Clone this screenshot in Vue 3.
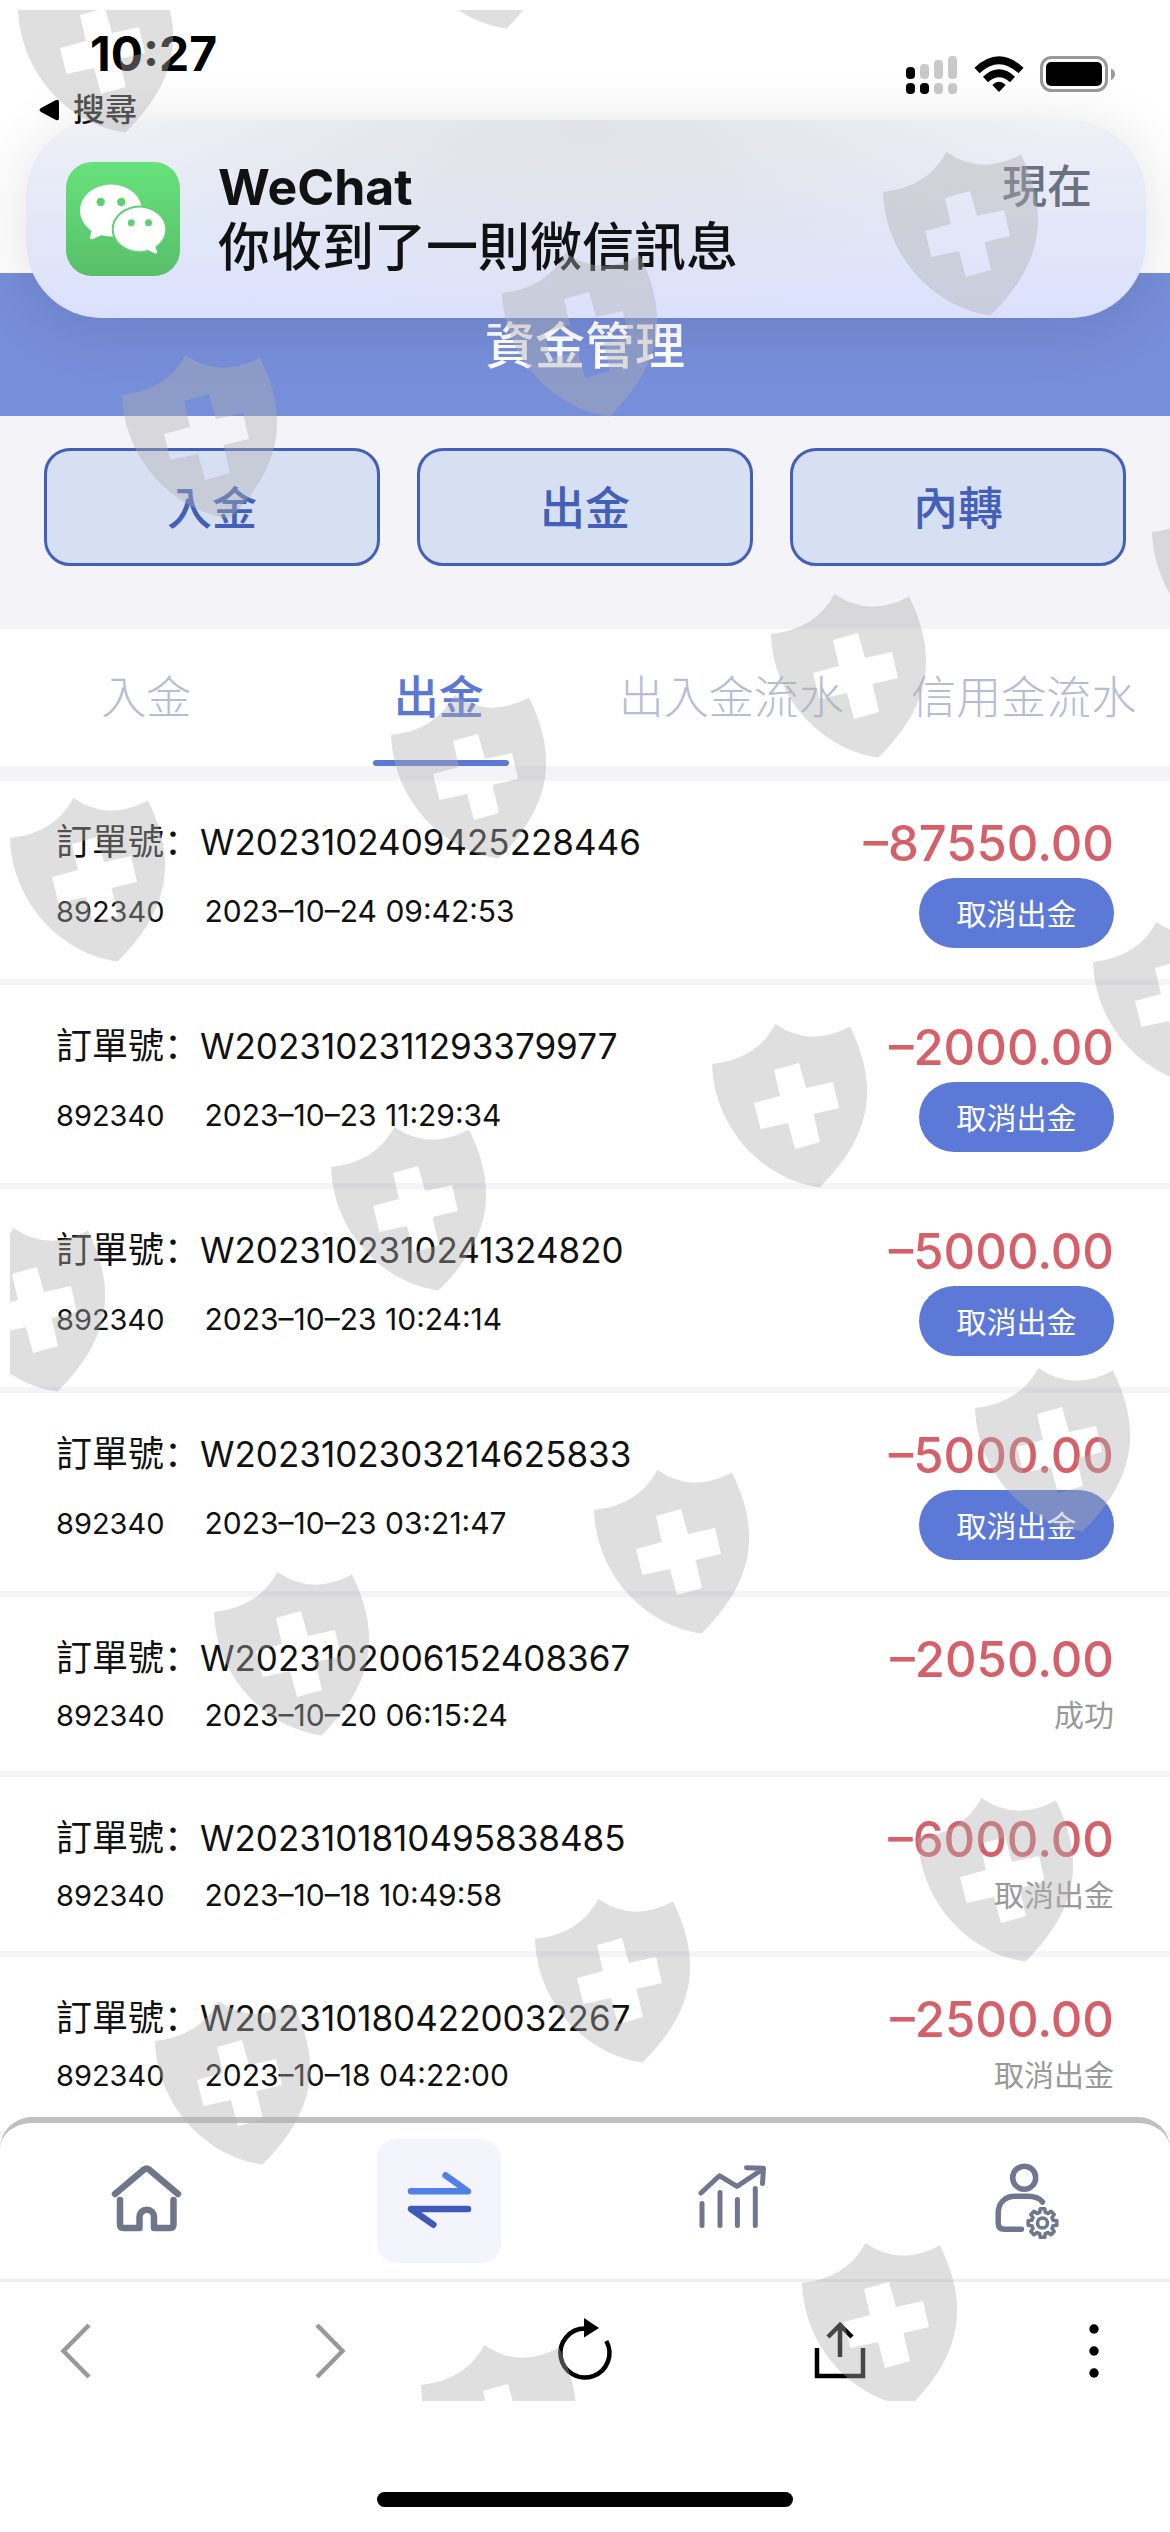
<script setup>
import { ref } from 'vue'

const actions = ['入金', '出金', '內轉']
const tabs = ['入金', '出金', '出入金流水', '信用金流水']
const activeTab = ref(1)

const orders = [
  { id: 'W2023102409425228446', account: '892340', time: '2023–10–24 09:42:53', amount: '–87550.00', pending: true },
  { id: 'W2023102311293379977', account: '892340', time: '2023–10–23 11:29:34', amount: '–2000.00', pending: true },
  { id: 'W2023102310241324820', account: '892340', time: '2023–10–23 10:24:14', amount: '–5000.00', pending: true },
  { id: 'W2023102303214625833', account: '892340', time: '2023–10–23 03:21:47', amount: '–5000.00', pending: true },
  { id: 'W2023102006152408367', account: '892340', time: '2023–10–20 06:15:24', amount: '–2050.00', status: '成功' },
  { id: 'W2023101810495838485', account: '892340', time: '2023–10–18 10:49:58', amount: '–6000.00', status: '取消出金' },
  { id: 'W2023101804220032267', account: '892340', time: '2023–10–18 04:22:00', amount: '–2500.00', status: '取消出金' },
]

// Watermark shields, placed on a slanted lattice
const shields = [
  [399, -135], [18, -31],
  [883, 152], [502, 253], [122, 355],
  [1152, 492], [771, 594], [391, 695], [10, 798],
  [1093, 922], [712, 1024], [331, 1127], [-50, 1228],
  [975, 1368], [594, 1470], [214, 1572],
  [918, 1798], [535, 1899], [155, 2001],
  [802, 2243], [421, 2345],
]

// Eight-toothed outline of the settings gear
const gear = Array.from({ length: 8 }, (_, i) => {
  const at = (deg, r) => {
    const a = ((i * 45 + deg) * Math.PI) / 180
    return `${(80.5 + r * Math.sin(a)).toFixed(1)},${(84 - r * Math.cos(a)).toFixed(1)}`
  }
  return [at(-9, 14.5), at(9, 14.5), at(15, 11), at(30, 11)].join(' ')
}).join(' ')
</script>

<template>
  <div class="page">
    <header class="status">
      <div class="status-left">
        <div class="clock">10:27</div>
        <a class="back" href="#search">
          <svg width="22" height="22" viewBox="0 0 22 22" aria-hidden="true"><path d="M3 9 L18 1 Q21 0 21 3 V19 Q21 22 18 21 L3 13 Q0 11 3 9Z" /></svg>
          搜尋
        </a>
      </div>
      <div class="status-right">
        <svg width="52" height="38" viewBox="0 0 52 38" aria-hidden="true">
          <g fill="#000"><rect x="0" y="11" width="9" height="12" rx="4" /><rect x="0" y="27" width="9" height="11" rx="4" /><rect x="14" y="27" width="9" height="11" rx="4" /></g>
          <g fill="#c9c9c9"><rect x="14" y="8" width="9" height="15" rx="4" /><rect x="28" y="4" width="9" height="19" rx="4" /><rect x="42" y="0" width="9" height="23" rx="4" /><rect x="28" y="27" width="9" height="11" rx="4" /><rect x="42" y="27" width="9" height="11" rx="4" /></g>
        </svg>
        <svg width="50" height="38" viewBox="0 0 50 38" aria-hidden="true">
          <g fill="none" stroke="#000" stroke-width="7.500"><path d="M3 14.500 Q25 -6 47 14.500" /><path d="M11.500 23.500 Q25 11 38.500 23.500" /></g>
          <path d="M25 36 L18.300 29 Q25 22.500 31.700 29Z" />
        </svg>
        <svg width="76" height="38" viewBox="0 0 76 38" aria-hidden="true">
          <rect x="1.500" y="1.500" width="65" height="33" rx="10" fill="#fff" stroke="#999" stroke-width="3" />
          <rect x="6" y="6" width="56" height="24" rx="5" />
          <path d="M71 12.500 Q75 14 75 18 T71 24Z" fill="#999" />
        </svg>
      </div>
    </header>

    <aside class="notice">
      <svg class="app-icon" width="114" height="114" viewBox="0 0 114 114" aria-hidden="true">
        <defs><linearGradient id="wx" x1="0" y1="0" x2="0" y2="1"><stop offset="0" stop-color="#67e27c" /><stop offset="1" stop-color="#58bf69" /></linearGradient></defs>
        <rect width="114" height="114" rx="26" fill="url(#wx)" />
        <ellipse cx="45" cy="48.500" rx="31" ry="26" fill="#fff" />
        <path d="M26 66 L24 76 Q24.500 78 27 77 L38 72Z" fill="#fff" />
        <ellipse cx="73.500" cy="67.400" rx="27.800" ry="23.800" fill="#5fd072" />
        <ellipse cx="73.500" cy="67.400" rx="25.800" ry="21.800" fill="#fff" />
        <path d="M80 87 L89 91.500 Q91.500 92 91 90 L89 83Z" fill="#fff" />
        <g fill="#5fd072"><circle cx="34.700" cy="40" r="4.200" /><circle cx="55.300" cy="40" r="4.200" /><circle cx="65.300" cy="60.700" r="3.500" /><circle cx="82.500" cy="60.700" r="3.500" /></g>
      </svg>
      <div class="notice-text">
        <div class="notice-head"><strong>WeChat</strong><span>現在</span></div>
        <p>你收到了一則微信訊息</p>
      </div>
    </aside>

    <h1 class="title">資金管理</h1>

    <div class="actions">
      <button v-for="a in actions" :key="a" type="button">{{ a }}</button>
    </div>

    <nav class="tabs">
      <button v-for="(t, i) in tabs" :key="t" type="button" :class="{ active: i === activeTab }" @click="activeTab = i">{{ t }}</button>
    </nav>

    <ul class="orders">
      <li v-for="o in orders" :key="o.id">
        <div class="line first">
          <div class="order-id"><span>訂單號<i>：</i></span>{{ o.id }}</div>
          <div class="amount">{{ o.amount }}</div>
        </div>
        <div class="line second">
          <div class="meta"><span>{{ o.account }}</span><time>{{ o.time }}</time></div>
          <button v-if="o.pending" type="button">取消出金</button>
          <div v-else class="state">{{ o.status }}</div>
        </div>
      </li>
    </ul>

    <nav class="tabbar">
      <a href="#home" aria-label="首頁">
        <svg viewBox="0 0 124 124" stroke="#70768a" stroke-width="6.500">
          <path d="M31 55 L60 30.500 Q62.600 28.500 65 30.500 L94 55" />
          <path d="M36 61 V85.500 Q36 89 39.500 89 H55.500 V78 a7.200 7.200 0 0 1 14.500 0 V89 H86 Q89.500 89 89.500 85.500 V61" />
        </svg>
      </a>
      <a href="#funds" class="active" aria-label="資金">
        <svg viewBox="0 0 124 124" stroke-width="6.500">
          <path d="M34 52.300 H91 L68.600 36.300" stroke="#5380e8" />
          <path d="M91 70 H34 L56.300 85.700" stroke="#4058b8" />
        </svg>
      </a>
      <a href="#chart" aria-label="行情">
        <svg viewBox="0 0 124 124" stroke="#70768f" stroke-width="5">
          <path d="M32 54 L50.400 36.700 L68 47.300 L94 30 M77.500 28.700 L94.500 29.300 L93.500 44.500" />
          <path d="M33 64.500 V86.500 M51 53.500 V86.500 M68.400 60.500 V86.500 M86.300 49.500 V86.500" />
        </svg>
      </a>
      <a href="#me" aria-label="我的">
        <svg viewBox="0 0 124 124" stroke="#70768f" stroke-width="5.500">
          <circle cx="62.200" cy="38.700" r="11.500" />
          <path d="M80.500 63 Q76 57.300 66 57.300 H53 C43 57.300 36.200 64 36.200 74 V84 Q36.200 90.300 42.500 90.300 H59.500" />
          <g stroke-width="3.600"><polygon :points="gear" /><circle cx="80.500" cy="84" r="5" /></g>
        </svg>
      </a>
    </nav>

    <footer class="browser">
      <div class="tools">
        <button type="button" aria-label="上一頁"><svg viewBox="0 0 72 72" stroke="#999"><path d="M49 10 L23.500 36 L49 62" /></svg></button>
        <button type="button" aria-label="下一頁"><svg viewBox="0 0 72 72" stroke="#999"><path d="M22 10 L47.500 36 L22 62" /></svg></button>
        <button type="button" aria-label="重新載入"><svg viewBox="0 0 72 72" stroke="#000"><path d="M57.300 26 A24.500 24.500 0 1 1 36 13.500" /><path d="M35 3 L50 13 L35 22.500Z" fill="#000" stroke="none" /></svg></button>
        <button type="button" aria-label="分享"><svg viewBox="0 0 72 72" stroke="#000"><path d="M13 33 V61 H59 V33 M36 42 V11 M24 22 L36 10 L48 22" /></svg></button>
        <button type="button" aria-label="更多"><svg viewBox="0 0 72 72" stroke="none"><g fill="#000"><circle cx="36" cy="14" r="4.700" /><circle cx="36" cy="36" r="4.700" /><circle cx="36" cy="58" r="4.700" /></g></svg></button>
      </div>
      <div class="indicator"></div>
    </footer>

    <div class="watermark" aria-hidden="true">
      <svg width="100%" height="100%">
        <path
          v-for="([x, y], i) in shields"
          :key="i"
          :transform="`translate(${x - 10} ${y - 10})`"
          fill-rule="evenodd"
          d="M0 40 Q45 35 63.400 0 Q98 24 138 2.500 C162 52 168 104 107.500 163.500 C52 156 2 105 0 40Z M62 46 L87 39 L94 64 L121 58 L127 84 L101.500 90 L108 118 L83 125 L76 99 L48.500 105 L42 79 L68 72Z"
        />
      </svg>
    </div>
  </div>
</template>

<style>
body {
  margin: 0;
  background: #fff;
}
</style>

<style scoped>
.page {
  position: relative;
  overflow: hidden;
  background: #fff;
  color: #111;
  font-family: Inter, "Noto Sans CJK TC", sans-serif;
}
button {
  margin: 0;
  padding: 0;
  border: 0;
  background: none;
  font: inherit;
  cursor: pointer;
}
a {
  color: inherit;
  text-decoration: none;
}
.status {
  display: flex;
  justify-content: space-between;
  align-items: flex-start;
  box-sizing: border-box;
  height: 273px;
  padding: 24px 54px 0 38px;
}
.clock {
  padding-left: 52px;
  font-size: 48px;
  font-weight: 700;
  line-height: 60px;
  color: #000;
}
.back {
  display: flex;
  align-items: center;
  gap: 13px;
  position: relative;
  z-index: 2;
  font-size: 32px;
  font-weight: 500;
  line-height: 52px;
}
.status-right {
  display: flex;
  gap: 16px;
  padding-top: 32px;
}
.notice {
  position: absolute;
  top: 120px;
  left: 26px;
  right: 24px;
  z-index: 1;
  display: flex;
  align-items: center;
  gap: 38px;
  box-sizing: border-box;
  height: 198px;
  padding: 0 54px 0 40px;
  border-radius: 76px;
  background:
    radial-gradient(ellipse 42% 100% at 50% 0, rgba(220, 220, 224, 0.7), rgba(220, 220, 224, 0)),
    linear-gradient(#eff1f6, #e3e8f8 50%, #dbe1fd);
  box-shadow: 0 8px 64px rgba(0, 0, 0, 0.12);
}
.app-icon {
  flex: none;
}
.notice-text {
  flex: 1;
}
.notice-head {
  display: flex;
  justify-content: space-between;
  font-size: 50px;
  line-height: 58px;
}
.notice-head strong {
  font-weight: 700;
}
.notice-head span {
  font-size: 45px;
  font-weight: 500;
  color: #6c7180;
}
.notice p {
  margin: 0;
  font-size: 52px;
  font-weight: 500;
  line-height: 64px;
}
.title {
  margin: 0;
  padding-top: 4px;
  background: #778eda;
  color: #fff;
  font-size: 50px;
  font-weight: 500;
  line-height: 139px;
  text-align: center;
}
.actions {
  display: flex;
  gap: 37px;
  padding: 32px 44px 63px;
  background: #f3f3f8;
}
.actions button {
  flex: 1;
  height: 118px;
  padding-bottom: 4px;
  border: 3px solid #435fb8;
  border-radius: 26px;
  background: #d7e0f3;
  color: #435fb8;
  font-size: 45px;
  font-weight: 500;
}
.tabs {
  display: grid;
  grid-template-columns: repeat(4, 1fr);
  border-bottom: 15px solid #f3f3f8;
}
.tabs button {
  position: relative;
  height: 137px;
  color: #b5bdd5;
  font-size: 45px;
  font-weight: 300;
  line-height: 136px;
  white-space: nowrap;
}
.tabs .active {
  color: #5b78d6;
  font-weight: 500;
}
.tabs .active::after {
  content: "";
  position: absolute;
  bottom: 0;
  left: 50%;
  width: 136px;
  height: 6px;
  margin-left: -66px;
  border-radius: 3px;
  background: #5b78d6;
}
.orders {
  margin: 0;
  padding: 0;
  list-style: none;
}
.orders li {
  padding: 30px 56px 31px;
  border-bottom: 6px solid #f3f3f8;
}
.line {
  display: flex;
  justify-content: space-between;
  align-items: center;
}
.first {
  align-items: flex-start;
  height: 64px;
  margin-bottom: 3px;
}
.second {
  min-height: 46px;
}
.order-id {
  font-size: 35px;
  line-height: 56px;
}
.order-id span {
  font-size: 36px;
}
.order-id i {
  font-family: "Noto Sans CJK SC", sans-serif;
  font-style: normal;
}
.amount {
  color: #d6606a;
  font-size: 49px;
  font-weight: 500;
  line-height: 66px;
}
.meta {
  display: flex;
  align-items: baseline;
  gap: 40px;
  font-size: 29px;
  line-height: 40px;
  padding-bottom: 4px;
}
.meta time {
  font-size: 30px;
}
.second button {
  width: 195px;
  height: 70px;
  padding-bottom: 2px;
  border-radius: 35px;
  background: #5d79d7;
  color: #fff;
  font-size: 30px;
}
.state {
  color: #999;
  font-size: 30px;
  line-height: 42px;
  padding-bottom: 4px;
}
.tabbar {
  position: relative;
  display: grid;
  grid-template-columns: repeat(4, 1fr);
  justify-items: center;
  margin-top: -20px;
  padding: 16px 0;
  border-top: 6px solid #c0c0c0;
  border-radius: 32px 32px 0 0;
  background: #fff;
}
.tabbar a {
  width: 124px;
  height: 124px;
  border-radius: 20px;
}
.tabbar .active {
  background: #f4f4fd;
}
.tabbar svg {
  display: block;
  fill: none;
  stroke-linecap: round;
  stroke-linejoin: round;
}
.browser {
  padding-bottom: 24px;
  border-top: 3px solid #efefef;
}
.tools {
  display: flex;
  justify-content: space-between;
  padding: 33px 40px 105px;
}
.tools button {
  width: 72px;
  height: 72px;
}
.tools svg {
  display: block;
  fill: none;
  stroke-width: 4.5px;
}
.indicator {
  width: 416px;
  height: 15px;
  margin: 0 auto;
  border-radius: 8px;
  background: #000;
}
.watermark {
  position: absolute;
  top: 10px;
  right: 0;
  bottom: 130px;
  left: 10px;
  z-index: 3;
  overflow: hidden;
  pointer-events: none;
}
.watermark svg {
  display: block;
  fill: rgba(175, 175, 175, 0.4);
}
</style>
